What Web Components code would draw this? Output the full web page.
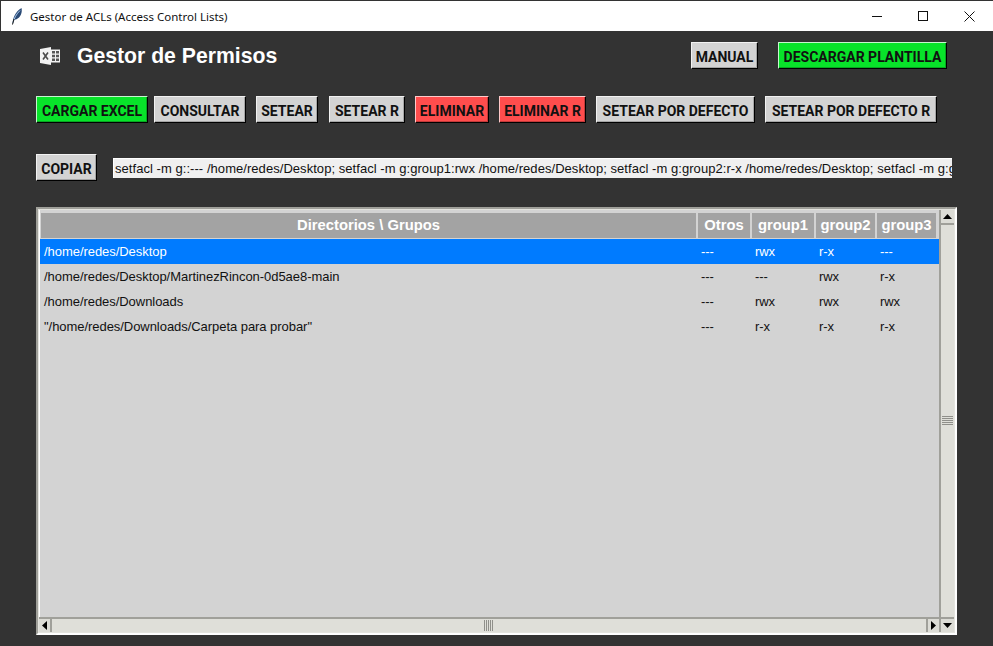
<!DOCTYPE html>
<html lang="es">
<head>
<meta charset="utf-8">
<title>Gestor de ACLs</title>
<style>
  html, body { margin: 0; padding: 0; }
  body { width: 993px; height: 646px; overflow: hidden; background: #333; font-family: "Liberation Sans", Arial, sans-serif; }
  .row { display: flex; align-items: center; }
</style>
</head>
<body>
<win-titlebar>Gestor de ACLs (Access Control Lists)</win-titlebar>
<app-shell>
  <app-header slot="header">Gestor de Permisos</app-header>
  <div class="row" slot="actions">
    <tk-button kind="green" style="--w:112px;margin-right:6px">CARGAR EXCEL</tk-button>
    <tk-button style="--w:92px;margin-right:10px">CONSULTAR</tk-button>
    <tk-button style="--w:62px;margin-right:11px">SETEAR</tk-button>
    <tk-button style="--w:76px;margin-right:10px">SETEAR R</tk-button>
    <tk-button kind="red" style="--w:74px;margin-right:10px">ELIMINAR</tk-button>
    <tk-button kind="red" style="--w:87px;margin-right:10px">ELIMINAR R</tk-button>
    <tk-button style="--w:159px;margin-right:10px">SETEAR POR DEFECTO</tk-button>
    <tk-button style="--w:172px">SETEAR POR DEFECTO R</tk-button>
  </div>
  <div class="row" slot="command">
    <tk-button style="--w:61px;margin-right:16px">COPIAR</tk-button>
    <tk-entry value="setfacl -m g::--- /home/redes/Desktop; setfacl -m g:group1:rwx /home/redes/Desktop; setfacl -m g:group2:r-x /home/redes/Desktop; setfacl -m g:group3:--- /home/redes/Desktop"></tk-entry>
  </div>
  <acl-table slot="table"></acl-table>
</app-shell>

<script>
  // titlebar van het venster
  class WinTitlebar extends HTMLElement {
    constructor() {
      super();
      this.attachShadow({ mode: 'open' });
      this.shadowRoot.innerHTML = `
        <style>
          :host { display: flex; align-items: center; height: 30px; background: #fff; border-top: 1px solid #333; margin-left: 1px;
            font: 11.5px "Noto Sans", "Open Sans", sans-serif; color: #111; }
          .feather { margin-left: 10px; width: 12px; height: 18px; flex: none; }
          .title { margin-left: 7px; flex: 1; white-space: nowrap; }
          .ctl { width: 46px; height: 30px; display: flex; align-items: center; justify-content: center; flex: none; }
          .ctl:last-child { margin-right: 1px; }
        </style>
        <svg class="feather" viewBox="0 0 12 18">
          <path d="M1.5 16.5 C2 11 4 5 10.5 1 C11.5 5 10 10.5 5 12.5 L3.5 12.5 Z" fill="#2a4a75"/>
          <path d="M2 16 C3 11 5.5 7 9 3.5" stroke="#a9c8ee" stroke-width="1" fill="none"/>
          <path d="M1.5 17.5 L3 12" stroke="#111" stroke-width="1"/>
        </svg>
        <span class="title"><slot></slot></span>
        <span class="ctl"><svg width="11" height="11"><path d="M0 5.5H10" stroke="#111"/></svg></span>
        <span class="ctl"><svg width="11" height="11"><rect x=".5" y=".5" width="9" height="9" fill="none" stroke="#111"/></svg></span>
        <span class="ctl"><svg width="11" height="11"><path d="M.5 .5L10.5 10.5M10.5 .5L.5 10.5" stroke="#111"/></svg></span>
      `;
    }
  }

  // vaste verticale opbouw van de pagina
  class AppShell extends HTMLElement {
    constructor() {
      super();
      this.attachShadow({ mode: 'open' });
      this.shadowRoot.innerHTML = `
        <style>
          :host { display: flex; flex-direction: column; padding: 11px 36px 0; }
          .a { margin-top: 27px; }
          .c { margin-top: 31px; }
          .t { margin-top: 26px; }
        </style>
        <slot name="header"></slot>
        <div class="a"><slot name="actions"></slot></div>
        <div class="c"><slot name="command"></slot></div>
        <div class="t"><slot name="table"></slot></div>
      `;
    }
  }

  class AppHeader extends HTMLElement {
    constructor() {
      super();
      this.attachShadow({ mode: 'open' });
      this.shadowRoot.innerHTML = `
        <style>
          :host { display: flex; align-items: center; height: 27px; }
          svg { margin-left: 4px; width: 20px; height: 18px; flex: none; }
          h1 { margin: 1px 0 0 17px; flex: 1; font: bold 21.2px "Liberation Sans", Arial, sans-serif; color: #fff; white-space: nowrap; }
          .btns { display: flex; margin-right: 10px; }
        </style>
        <svg viewBox="0 0 20 18">
          <path d="M0 2L11 0V18L0 16Z" fill="#f2f2f2"/>
          <path d="M3 5.5L8 12.5M8 5.5L3 12.5" stroke="#4a4a4a" stroke-width="1.6"/>
          <rect x="11" y="2.5" width="9" height="13" fill="#f2f2f2"/>
          <path d="M12 4h3v2.4h-3zM16 4h3v2.4h-3zM12 7.8h3v2.4h-3zM16 7.8h3v2.4h-3zM12 11.6h3v2.4h-3zM16 11.6h3v2.4h-3z" fill="#555"/>
        </svg>
        <h1><slot></slot></h1>
        <div class="btns">
          <tk-button style="--w:67px;margin-right:20px">MANUAL</tk-button>
          <tk-button kind="green" style="--w:169px">DESCARGAR PLANTILLA</tk-button>
        </div>
      `;
    }
  }

  class TkButton extends HTMLElement {
    constructor() {
      super();
      this.attachShadow({ mode: 'open' });
      this.shadowRoot.innerHTML = `
        <style>
          :host { display: block; flex: none; width: var(--w, 80px); height: 27px; }
          button { display: block; box-sizing: border-box; width: 100%; height: 100%; padding: 2px 0 0; margin: 0;
            background: #d3d3d3; color: #111; border: 1px solid; border-color: #f2f2f2 #000 #000 #f2f2f2;
            box-shadow: inset -1px -1px 0 #a5a5a5;
            font: bold 14px Roboto, "Liberation Sans", Arial, sans-serif; white-space: nowrap; }
          :host([kind="green"]) button { background: #08e32a; border-color: #c8f5cf #000 #000 #c8f5cf; box-shadow: inset -1px -1px 0 #08a822; }
          :host([kind="red"]) button { background: #ff4d4d; border-color: #ffc9c9 #000 #000 #ffc9c9; box-shadow: inset -1px -1px 0 #c23a3a; }
        </style>
        <button><slot></slot></button>
      `;
    }
  }

  class TkEntry extends HTMLElement {
    constructor() {
      super();
      this.attachShadow({ mode: 'open' });
      this.shadowRoot.innerHTML = `
        <style>
          :host { display: block; flex: none; width: 839px; height: 20px; margin-right: -16px; }
          div { box-sizing: border-box; height: 100%; padding: 0 1px; background: #f0f0f0; border-top: 1px solid #fff; border-left: 1px solid #fff;
            color: #111; font: 13px/19px "Liberation Sans", Arial, sans-serif; letter-spacing: .05px; white-space: nowrap; overflow: hidden; }
        </style>
        <div></div>
      `;
    }
    connectedCallback() {
      this.shadowRoot.querySelector('div').textContent = this.getAttribute('value') || '';
    }
  }

  // scrollbar in Tk-stijl, orient = v of h
  class TkScrollbar extends HTMLElement {
    constructor() {
      super();
      this.attachShadow({ mode: 'open' });
      this.shadowRoot.innerHTML = `
        <style>
          :host { display: flex; background: #dcdcd6; box-sizing: border-box; }
          :host([orient="v"]) { flex-direction: column; width: 15px; height: 100%; border-left: 2px solid #a0a09a; }
          :host([orient="h"]) { flex-direction: row; height: 15px; width: 100%; border-top: 2px solid #a0a09a; }
          .arrow { flex: none; display: flex; align-items: center; justify-content: center; background: #dcdcd6; }
          :host([orient="v"]) .arrow { height: 13px; border-bottom: 2px solid #a0a09a; }
          :host([orient="v"]) .arrow.end { border-bottom: 0; border-top: 2px solid #a0a09a; }
          :host([orient="h"]) .arrow { width: 11px; border-right: 2px solid #a0a09a; }
          :host([orient="h"]) .arrow.end { border-right: 0; border-left: 2px solid #a0a09a; }
          .thumb { flex: 1; display: flex; align-items: center; justify-content: center; background: #dfdfd9; }
          .grip { display: block; }
        </style>
        <span class="arrow"><svg class="a1" width="9" height="9"></svg></span>
        <span class="thumb"><svg class="grip"></svg></span>
        <span class="arrow end"><svg class="a2" width="9" height="9"></svg></span>
      `;
    }
    connectedCallback() {
      const v = this.getAttribute('orient') === 'v';
      const sr = this.shadowRoot;
      sr.querySelector('.a1').innerHTML = v ? '<path d="M0 7H9L4.5 2Z"/>' : '<path d="M7 0V9L2 4.5Z"/>';
      sr.querySelector('.a2').innerHTML = v ? '<path d="M0 2H9L4.5 7Z"/>' : '<path d="M2 0V9L7 4.5Z"/>';
      const grip = sr.querySelector('.grip');
      let lines = '';
      for (let i = 0; i < 5; i++) {
        lines += v
          ? `<rect x="0" y="${i * 2}" width="11" height="1" fill="#8f8f8a"/>`
          : `<rect x="${i * 2}" y="0" width="1" height="11" fill="#8f8f8a"/>`;
      }
      grip.setAttribute('width', v ? 11 : 10);
      grip.setAttribute('height', v ? 10 : 11);
      grip.innerHTML = lines;
    }
  }

  const COLS = [
    { name: 'Directorios \\ Grupos', w: 657 },
    { name: 'Otros', w: 54 },
    { name: 'group1', w: 64 },
    { name: 'group2', w: 61 },
    { name: 'group3', w: 61 }
  ];
  const ROWS = [
    ['/home/redes/Desktop', '---', 'rwx', 'r-x', '---'],
    ['/home/redes/Desktop/MartinezRincon-0d5ae8-main', '---', '---', 'rwx', 'r-x'],
    ['/home/redes/Downloads', '---', 'rwx', 'rwx', 'rwx'],
    ['"/home/redes/Downloads/Carpeta para probar"', '---', 'r-x', 'r-x', 'r-x']
  ];

  class AclTable extends HTMLElement {
    constructor() {
      super();
      this.attachShadow({ mode: 'open' });
      const tpl = COLS.map(c => c.w + 'px').join(' ');
      this.shadowRoot.innerHTML = `
        <style>
          :host { display: block; box-sizing: border-box; width: 921px; height: 428px; border: 2px solid; border-color: #a0a09a #fff #fff #a0a09a; background: #dcdcd6; }
          .frame { display: grid; grid-template-columns: 1fr 15px; grid-template-rows: 1fr 15px; height: 100%; box-sizing: border-box; border: 1px solid #e4e4de; }
          .view { background: #d3d3d3; overflow: hidden; padding-top: 2px; border-left: 1px solid #fff; }
          .vbar { grid-column: 2; grid-row: 1 / 3; }
          .head, .tr { display: grid; grid-template-columns: ${tpl}; }
          .head { height: 27px; background: #d3d3d3; }
          .th { box-sizing: border-box; background: #a3a3a3; border: 1px solid #d3d3d3; color: #fff; font: bold 14.8px/24px "Liberation Sans", Arial, sans-serif; text-align: center; white-space: nowrap; overflow: hidden; }
          .tr { height: 25px; color: #111; font: 13px/26px "Liberation Sans", Arial, sans-serif; letter-spacing: -.05px; }
          .tr.sel { background: #007bff; color: #fff; }
          .td { padding-left: 4px; white-space: nowrap; overflow: hidden; }
        </style>
        <div class="frame">
          <div class="view">
            <div class="head">${COLS.map(c => `<div class="th">${c.name}</div>`).join('')}</div>
            ${ROWS.map((r, i) => `<div class="tr${i === 0 ? ' sel' : ''}">${r.map(v => `<div class="td">${v}</div>`).join('')}</div>`).join('')}
          </div>
          <tk-scrollbar class="vbar" orient="v"></tk-scrollbar>
          <tk-scrollbar orient="h"></tk-scrollbar>
        </div>
      `;
    }
  }

  customElements.define('tk-button', TkButton);
  customElements.define('tk-entry', TkEntry);
  customElements.define('tk-scrollbar', TkScrollbar);
  customElements.define('win-titlebar', WinTitlebar);
  customElements.define('app-shell', AppShell);
  customElements.define('app-header', AppHeader);
  customElements.define('acl-table', AclTable);
</script>
</body>
</html>
